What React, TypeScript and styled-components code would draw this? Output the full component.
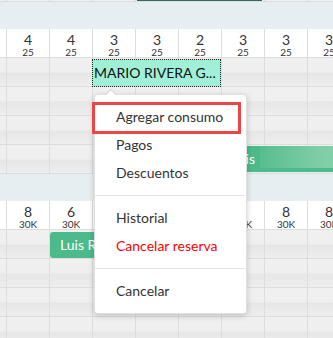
import React, { ReactElement } from "react";
import styled, { createGlobalStyle } from "styled-components";

/*
==========================
    Styled Components
==========================
*/
const GlobalStyle = createGlobalStyle`
  html, body {
    margin: 0;
    padding: 0;
    background: #ffffff;
    overflow: hidden;
  }
`;

const Board = styled.div`
  /* Size */
  position: relative;
  width: 333px;
  height: 338px;
  overflow: hidden;

  /* Look */
  background: #ffffff;
  font-family: Lato, "Open Sans", Arial, sans-serif;
  color: #333333;
`;

const Track = styled.div`
  margin-left: -37px;
  width: 387px;
`;

const GridRow = styled.div<{ $h: number }>`
  display: grid;
  grid-template-columns: repeat(9, 43px);
  grid-template-rows: ${(p) => p.$h}px;
`;

const TopCell = styled.div`
  grid-row: 1;
  border-left: 1px solid #dddddd;
  border-bottom: 1px solid #dddddd;
  background: #f0f0f0;
`;

const TopBar = styled.div<{ $from: number; $to: number }>`
  grid-row: 1;
  grid-column: ${(p) => p.$from} / ${(p) => p.$to};
  margin: 0 2px;
  height: 1px;
  background: #2f6b60;
  z-index: 1;
`;

const Band = styled.div`
  height: 27px;
  background: #e6eef1;
`;

const HeadCell = styled.div`
  grid-row: 1;
  border-left: 1px solid #dddddd;
  border-bottom: 1px solid #dddddd;
  background: #ffffff;
  display: flex;
  flex-direction: column;
  align-items: center;
  padding-top: 3px;
  box-sizing: border-box;
`;

const HeadNum = styled.span`
  font-size: 14px;
  line-height: 15px;
`;

const HeadSub = styled.span`
  font-size: 10px;
  line-height: 10px;
`;

const DayCell = styled.div`
  grid-row: 1;
  border-left: 1px solid #dddddd;
  border-bottom: 1px solid #dddddd;
  background: linear-gradient(
    to bottom,
    #f0f0f0 0%,
    #efefef 50%,
    #e6e6e6 54%,
    #eeeeee 100%
  );
`;

const Booking = styled.div<{ $from: number; $to: number }>`
  grid-row: 1;
  grid-column: ${(p) => p.$from} / ${(p) => p.$to};
  z-index: 1;
  align-self: start;
  box-sizing: border-box;
  white-space: nowrap;
  overflow: hidden;
  font-size: 14px;
`;

const Selected = styled(Booking)`
  margin-top: 1px;
  height: 28px;
  line-height: 26px;
  padding-left: 1px;
  background: #a0f0d8;
  border: 1px dotted #222222;
  color: #111111;
`;

const GreenBar = styled(Booking)<{ $top: number; $left?: number }>`
  position: relative;
  margin-top: ${(p) => p.$top}px;
  margin-left: ${(p) => p.$left ?? 0}px;
  height: 26px;
  line-height: 26px;
  padding-left: 10px;
  border-radius: 3px;
  background: #4cba8a;
  color: #ffffff;
`;

const Shine = styled.span`
  position: absolute;
  left: 39px;
  right: 0;
  top: 0;
  bottom: 4px;
  background: linear-gradient(to right, #58bd8f 0%, #7ccca6 60%, #86d2ae 100%);
`;

const Menu = styled.div`
  position: absolute;
  left: 94px;
  top: 94px;
  width: 153px;
  box-sizing: border-box;
  padding: 8px 0;
  background: #ffffff;
  border: 1px solid rgba(0, 0, 0, 0.12);
  border-radius: 4px;
  box-shadow: 0 2px 6px rgba(0, 0, 0, 0.18);
  z-index: 5;

  &::before,
  &::after {
    content: "";
    position: absolute;
    left: 10px;
    width: 0;
    height: 0;
    border-left: 6px solid transparent;
    border-right: 6px solid transparent;
  }

  &::before {
    top: -6px;
    border-bottom: 6px solid rgba(0, 0, 0, 0.15);
  }

  &::after {
    top: -5px;
    border-bottom: 6px solid #ffffff;
  }
`;

const Item = styled.div<{ $danger?: boolean; $marked?: boolean }>`
  position: relative;
  height: 28px;
  line-height: 28px;
  padding: 0 21px;
  font-size: 14px;
  color: ${(p) => (p.$danger ? "#ff0000" : "#333333")};

  &::after {
    content: "";
    display: ${(p) => (p.$marked ? "block" : "none")};
    position: absolute;
    left: -3px;
    right: 5px;
    top: -1px;
    bottom: -3px;
    border: 3px solid #ee4444;
  }
`;

const Divider = styled.div`
  height: 1px;
  margin: 8px 0;
  background: #e5e5e5;
`;

/*
==========================
    Data
==========================
*/
const COLS = [0, 1, 2, 3, 4, 5, 6, 7, 8];
const TOP_HEAD = ["", "4", "4", "3", "3", "2", "3", "3", "3"];
const LOW_HEAD = ["", "8", "6", "8", "8", "8", "8", "8", "8"];

const Cells = ({ kind }: { kind: "top" | "day" }): ReactElement => (
  <>
    {COLS.map((c) =>
      kind === "top" ? (
        <TopCell key={c} style={{ gridColumn: c + 1 }} />
      ) : (
        <DayCell key={c} style={{ gridColumn: c + 1 }} />
      )
    )}
  </>
);

const Header = ({ nums, sub }: { nums: string[]; sub: string }): ReactElement => (
  <GridRow $h={29}>
    {nums.map((n, i) => (
      <HeadCell key={i} style={{ gridColumn: i + 1 }}>
        {n && (
          <>
            <HeadNum>{n}</HeadNum>
            <HeadSub>{sub}</HeadSub>
          </>
        )}
      </HeadCell>
    ))}
  </GridRow>
);

/*
==========================
    React Element
==========================
*/
const App = (): ReactElement => {
  return (
    <Board>
      <GlobalStyle />
      <Track>
        <GridRow $h={2}>
          <Cells kind="top" />
          <TopBar $from={5} $to={8} />
        </GridRow>
        <Band />
        <Header nums={TOP_HEAD} sub="25" />
        <GridRow $h={29}>
          <Cells kind="day" />
          <Selected $from={4} $to={7}>
            MARIO RIVERA G...
          </Selected>
        </GridRow>
        <GridRow $h={29}>
          <Cells kind="day" />
        </GridRow>
        <GridRow $h={29}>
          <Cells kind="day" />
        </GridRow>
        <GridRow $h={29}>
          <Cells kind="day" />
          <GreenBar $from={7} $to={10} $top={1}>
            Luis
            <Shine />
          </GreenBar>
        </GridRow>
        <Band />
        <Header nums={LOW_HEAD} sub="30K" />
        <GridRow $h={29}>
          <Cells kind="day" />
          <GreenBar $from={3} $to={7} $top={2} $left={1}>
            Luis Rodriguez
          </GreenBar>
        </GridRow>
        <GridRow $h={29}>
          <Cells kind="day" />
        </GridRow>
        <GridRow $h={29}>
          <Cells kind="day" />
        </GridRow>
        <GridRow $h={29}>
          <Cells kind="day" />
        </GridRow>
      </Track>

      <Menu>
        <Item $marked>Agregar consumo</Item>
        <Item>Pagos</Item>
        <Item>Descuentos</Item>
        <Divider />
        <Item>Historial</Item>
        <Item $danger>Cancelar reserva</Item>
        <Divider />
        <Item>Cancelar</Item>
      </Menu>
    </Board>
  );
};

export default App;
